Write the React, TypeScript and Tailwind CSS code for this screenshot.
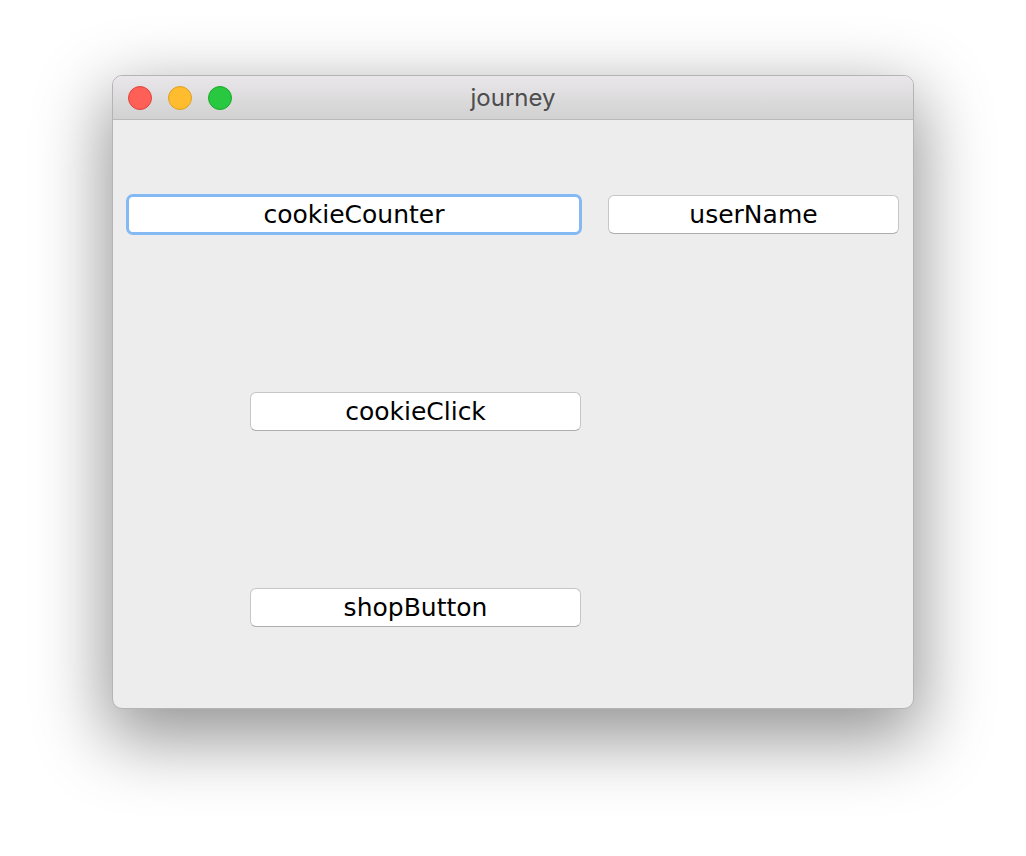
import React from "react";

function Btn({
  label,
  className,
}: {
  label: string;
  className: string;
}) {
  return (
    <div
      className={
        "flex items-center justify-center bg-white text-black text-[25px] leading-none " +
        className
      }
      style={{ fontFamily: '"DejaVu Sans", "Liberation Sans", sans-serif' }}
    >
      {label}
    </div>
  );
}

export default function App() {
  return (
    <div className="w-[1026px] h-[856px] bg-white pt-[75px] pl-[112px]">
      <div className="w-[802px] h-[634px] rounded-[10px] border border-[#b4b4b4] bg-[#ededed] overflow-hidden shadow-[0_24px_70px_6px_rgba(0,0,0,0.42)] flex flex-col">
        <div className="h-[44px] shrink-0 grid grid-cols-[1fr_auto_1fr] items-center bg-gradient-to-b from-[#e9e7e9] to-[#d2d1d2] border-b border-[#b9b9b9]">
          <div className="flex items-center gap-[16px] pl-[15px]">
            <span className="w-[24px] h-[24px] rounded-full bg-[#fe5f57] border border-[#e0443e]" />
            <span className="w-[24px] h-[24px] rounded-full bg-[#febc2e] border border-[#dea123]" />
            <span className="w-[24px] h-[24px] rounded-full bg-[#28c840] border border-[#1aab29]" />
          </div>
          <div
            className="text-[24px] text-[#4d4d4d] leading-none pt-[1px]"
            style={{ fontFamily: 'Inter, "Open Sans", sans-serif' }}
          >
            journey
          </div>
          <div />
        </div>
        <div className="flex flex-col">
          <div className="flex items-center mt-[74px] pl-[13px]">
            <Btn
              label="cookieCounter"
              className="w-[456px] h-[41px] rounded-[7px] border-[3px] border-[#85b9f3]"
            />
            <Btn
              label="userName"
              className="ml-[26px] w-[291px] h-[39px] rounded-[6px] border border-[#c6c6c6] border-b-[#adadad]"
            />
          </div>
          <Btn
            label="cookieClick"
            className="mt-[157px] ml-[137px] w-[331px] h-[39px] rounded-[6px] border border-[#c6c6c6] border-b-[#adadad]"
          />
          <Btn
            label="shopButton"
            className="mt-[157px] ml-[137px] w-[331px] h-[39px] rounded-[6px] border border-[#c6c6c6] border-b-[#adadad]"
          />
        </div>
      </div>
    </div>
  );
}
